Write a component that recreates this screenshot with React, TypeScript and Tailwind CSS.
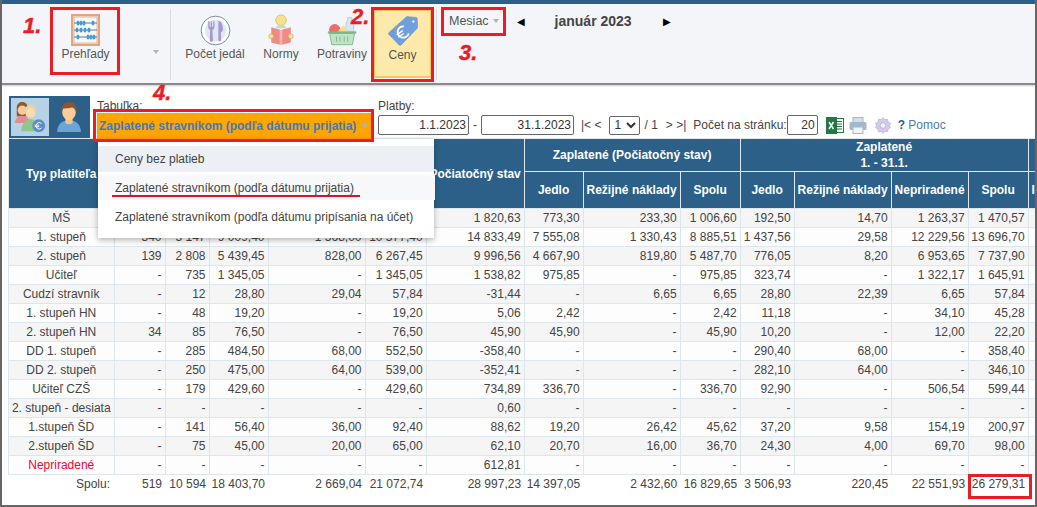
const rows: string[][] = [
    ['MŠ', '', '', '', '', '', '1 820,63', '773,30', '233,30', '1 006,60', '192,50', '14,70', '1 263,37', '1 470,57'],
    ['1. stupeň', '340', '5 147', '9 009,40', '1 568,00', '10 577,40', '14 833,49', '7 555,08', '1 330,43', '8 885,51', '1 437,56', '29,58', '12 229,56', '13 696,70'],
    ['2. stupeň', '139', '2 808', '5 439,45', '828,00', '6 267,45', '9 996,56', '4 667,90', '819,80', '5 487,70', '776,05', '8,20', '6 953,65', '7 737,90'],
    ['Učiteľ', '-', '735', '1 345,05', '-', '1 345,05', '1 538,82', '975,85', '-', '975,85', '323,74', '-', '1 322,17', '1 645,91'],
    ['Cudzí stravník', '-', '12', '28,80', '29,04', '57,84', '-31,44', '-', '6,65', '6,65', '28,80', '22,39', '6,65', '57,84'],
    ['1. stupeň HN', '-', '48', '19,20', '-', '19,20', '5,06', '2,42', '-', '2,42', '11,18', '-', '34,10', '45,28'],
    ['2. stupeň HN', '34', '85', '76,50', '-', '76,50', '45,90', '45,90', '-', '45,90', '10,20', '-', '12,00', '22,20'],
    ['DD 1. stupeň', '-', '285', '484,50', '68,00', '552,50', '-358,40', '-', '-', '-', '290,40', '68,00', '-', '358,40'],
    ['DD 2. stupeň', '-', '250', '475,00', '64,00', '539,00', '-352,41', '-', '-', '-', '282,10', '64,00', '-', '346,10'],
    ['Učiteľ CZŠ', '-', '179', '429,60', '-', '429,60', '734,89', '336,70', '-', '336,70', '92,90', '-', '506,54', '599,44'],
    ['2. stupeň - desiata', '-', '-', '-', '-', '-', '0,60', '-', '-', '-', '-', '-', '-', '-'],
    ['1.stupeň ŠD', '-', '141', '56,40', '36,00', '92,40', '88,62', '19,20', '26,42', '45,62', '37,20', '9,58', '154,19', '200,97'],
    ['2.stupeň ŠD', '-', '75', '45,00', '20,00', '65,00', '62,10', '20,70', '16,00', '36,70', '24,30', '4,00', '69,70', '98,00'],
    ['Nepriradené', '-', '-', '-', '-', '-', '612,81', '-', '-', '-', '-', '-', '-', '-'],
]

const totals = ['Spolu:', '519', '10 594', '18 403,70', '2 669,04', '21 072,74', '28 997,23', '14 397,05', '2 432,60', '16 829,65', '3 506,93', '220,45', '22 551,93', '26 279,31']

const colWidths = [
    'w-[105.5px]', 'w-[51px]', 'w-[44px]', 'w-[59px]', 'w-[97px]', 'w-[61px]', 'w-[98px]', 'w-[59px]',
    'w-[97px]', 'w-[60px]', 'w-[54px]', 'w-[97px]', 'w-[77px]', 'w-[60px]', 'w-[9px]',
]

const headCell = 'border border-[#dfe8ef] bg-[#2c6088] p-0 text-center align-middle font-bold text-white whitespace-nowrap'

function AbacusIcon() {
    const rods = [
        { y: 9, beads: [7, 10, 13, 22] },
        { y: 16, beads: [6, 10, 14, 18] },
        { y: 23, beads: [7, 17, 20, 23] },
    ]
    return (
        <svg width="29" height="32" viewBox="0 0 29 32">
            <rect x="1" y="1" width="27" height="30" fill="#fbf7f2" stroke="#e2a47e" strokeWidth="2.4" />
            <rect x="3" y="3" width="23" height="26" fill="none" stroke="#c9946f" strokeWidth="0.6" />
            {rods.map((r) => (
                <g key={r.y}>
                    <line x1="3" x2="26" y1={r.y} y2={r.y} stroke="#5d7f96" strokeWidth="1" />
                    {r.beads.map((b) => (
                        <ellipse key={b} cx={b} cy={r.y} rx="1.5" ry="2.6" fill="#3f9ddd" />
                    ))}
                </g>
            ))}
        </svg>
    )
}

function PlateIcon() {
    return (
        <svg width="31" height="31" viewBox="0 0 32 32">
            <circle cx="16" cy="16" r="14.8" fill="#fff" stroke="#76879b" strokeWidth="1" />
            <circle cx="16" cy="16" r="11" fill="#dfe9f2" />
            <path d="M8.500 6.500v6c0 1.600.8 2.500 2 3l-.5 10.500a1.700 1.700 0 0 0 3.400 0l-.5-10.500c1.200-.5 2-1.400 2-3v-6h-1.300v5.500h-1.100v-5.500h-1.400v5.500h-1.100v-5.500z" fill="#a898cf" />
            <path d="M19 6c3 0 4.600 4 4.600 9 0 1.800-.9 2.500-2.100 2.700l.4 8a1.500 1.500 0 0 1-3 0z" fill="#a898cf" />
        </svg>
    )
}

function ReaderIcon() {
    return (
        <svg width="28" height="32" viewBox="0 0 28 36">
            <circle cx="14" cy="7" r="6" fill="#fbe08c" stroke="#b6a064" strokeWidth="0.6" />
            <path d="M8 16c1-3 3-4 6-4s5 1 6 4z" fill="#bfe0bd" />
            <path d="M3 15l11 3 11-3v17l-11 3-11-3z" fill="#f08a86" />
            <path d="M14 18v17" stroke="#f9b8b4" strokeWidth="3" />
            <circle cx="3" cy="25" r="2.800" fill="#fbe08c" stroke="#b6a064" strokeWidth="0.6" />
            <circle cx="25" cy="25" r="2.800" fill="#fbe08c" stroke="#b6a064" strokeWidth="0.6" />
        </svg>
    )
}

function BasketIcon() {
    return (
        <svg width="31" height="31" viewBox="0 0 36 36">
            <path d="M24 3h5v3l2 4v9h-9v-9l2-4z" fill="#d6e8f3" stroke="#8db6d0" strokeWidth="0.6" />
            <circle cx="9" cy="17" r="6.500" fill="#ec6f6a" />
            <path d="M12 20l7-8 7 8z" fill="#f8df8a" />
            <rect x="1" y="19" width="33" height="2.500" fill="#7fb48b" />
            <path d="M3 21.500h29l-2.500 13h-24z" fill="#bfe3c4" stroke="#80b08c" strokeWidth="1" />
            <path d="M11 25v6M15 25v6M20 25v6M24 25v6" stroke="#80b08c" strokeWidth="1" />
        </svg>
    )
}

function TagIcon() {
    return (
        <svg width="30" height="32" viewBox="0 0 32 34">
            <path d="M20 1.500l10.200 1a1.200 1.200 0 0 1 1 1l.5 10-17.700 18.500a1.500 1.500 0 0 1-2.100 0L1 20.800a1.500 1.500 0 0 1 0-2.100z" fill="#6f9fdc" stroke="#5b8ccb" strokeWidth="0.5" />
            <path d="M27 5.500v3M25.500 7h3" stroke="#fff" strokeWidth="0.9" />
            <g transform="rotate(-35 15 19)">
                <path d="M20.500 14.500a6 6 0 1 0 0 9" fill="none" stroke="#fff" strokeWidth="2" />
                <path d="M9 17.500h8M9 20.500h7" stroke="#fff" strokeWidth="1.500" />
            </g>
        </svg>
    )
}

function PeopleIcon() {
    return (
        <svg width="33" height="33" viewBox="0 0 36 36">
            <path d="M3 7c0-4 3-6 6-6s6 2 6 6v10H3z" fill="#8e5a3c" />
            <circle cx="9" cy="10" r="5" fill="#f5c99a" />
            <path d="M1 24c0-5 4-8 8-8s8 3 8 8z" fill="#e88a94" />
            <path d="M12 10c0-4 3-6 6-6s6 2 6 6c0 3-1 5-1 7H13c0-2-1-4-1-7z" fill="#eed29a" />
            <circle cx="18" cy="13" r="5" fill="#f9dcb4" />
            <path d="M8 33c0-8 5-13 10-13s10 5 10 13z" fill="#8fc68b" />
            <circle cx="27" cy="27" r="7" fill="#5a8fce" />
            <path d="M30 24.500a3.500 3.500 0 1 0 0 5M22.500 26.300h5M22.500 28h5" fill="none" stroke="#fff" strokeWidth="1" />
        </svg>
    )
}

function PersonIcon() {
    return (
        <svg width="26" height="31" viewBox="0 0 28 34">
            <path d="M1 33c0-9 6-13 13-13s13 4 13 13z" fill="#6aa5d8" />
            <path d="M10 17h8v6c-2 2-6 2-8 0z" fill="#f3c48f" />
            <ellipse cx="14" cy="11" rx="7.500" ry="9" fill="#f8cd98" />
            <path d="M6 12C4 4 9 0 14 0s10 3 8 12c-1-4-3-6-5-6-3 1-8 1-9 1-1 1-2 3-2 5z" fill="#8a5434" />
        </svg>
    )
}

function ExcelIcon() {
    return (
        <svg width="18" height="17" viewBox="0 0 18 17">
            <rect x="6" y="1.500" width="11.500" height="14" fill="#fff" stroke="#217a45" />
            <path d="M11 4.500h5M11 7h5M11 9.500h5M11 12h5" stroke="#217a45" />
            <rect x="0" y="0" width="11" height="17" fill="#217a45" />
            <path d="M3 5l4.500 7M7.500 5L3 12" stroke="#fff" strokeWidth="1.500" />
        </svg>
    )
}

function PrinterIcon() {
    return (
        <svg width="18" height="17" viewBox="0 0 18 17">
            <rect x="4" y="0.500" width="10" height="5" fill="#d3dfeb" stroke="#a3b8cf" />
            <rect x="0.500" y="5" width="17" height="8" rx="1.500" fill="#a3b8cf" />
            <rect x="4" y="10" width="10" height="6.500" fill="#f0f3f7" stroke="#a3b8cf" />
        </svg>
    )
}

function GearIcon() {
    return (
        <svg width="16" height="17" viewBox="0 0 16 17">
            <path d="M8 .5l1.700 2.200 2.700-.6.700 2.700 2.400 1.400-1 2.300 1 2.300-2.400 1.400-.7 2.700-2.700-.6L8 16.500l-1.700-2.200-2.700.6-.7-2.700L.5 10.800l1-2.300-1-2.300 2.400-1.400.7-2.700 2.700.6z" fill="#d3cbe8" stroke="#b3a9d2" strokeWidth="0.6" />
            <circle cx="8" cy="8.500" r="2.800" fill="#f3f1f9" stroke="#b3a9d2" strokeWidth="0.8" />
        </svg>
    )
}

function Caret() {
    return <span className="h-0 w-0 border-x-[3.5px] border-t-[4px] border-x-transparent border-t-[#b0b3b8]" />
}

function ToolButton({ label, icon, active, className }: { label: string; icon: React.ReactNode; active?: boolean; className: string }) {
    return (
        <div className={`flex h-[68px] shrink-0 flex-col items-center ${active ? 'border-x border-t border-b-2 border-[#f3c766] bg-[#fdeaaa]' : ''} ${className}`}>
            <div className="flex h-[36px] items-end">{icon}</div>
            <span className="mt-[1px] text-[12px] leading-[14px] whitespace-nowrap text-[#555]">{label}</span>
        </div>
    )
}

function Annotation({ text, className }: { text: string; className: string }) {
    return <span className={`absolute text-[22px] leading-[20px] font-bold text-[#ed1c24] italic [-webkit-text-stroke:0.4px_#ed1c24] ${className}`}>{text}</span>
}

function RedBox({ className }: { className: string }) {
    return <div className={`pointer-events-none absolute border-[3px] border-[#ed1c24] ${className}`} />
}

export default function App() {
    return (
        <div className="relative h-[507px] w-[1037px] overflow-hidden border-x-2 border-b-2 border-[#666] bg-white font-['Liberation_Sans',sans-serif] text-[12px] text-[#444]">
            <div className="h-[4px] bg-[#2c6088]" />
            <div className="flex h-[81px] items-start border-b-2 border-[#8a8a8a] bg-[#f4f5f8] pt-[6px] shadow-[0_1px_2px_rgba(0,0,0,0.2)]">
                <ToolButton label="Prehľady" icon={<AbacusIcon />} className="ml-[49px] w-[69px]" />
                <span className="mt-[42px] ml-[33px] block"><span className="block"><Caret /></span></span>
                <div className="mt-[-1px] ml-[11px] h-[71px] w-px bg-[#d8dade]" />
                <ToolButton label="Počet jedál" icon={<PlateIcon />} className="ml-[14px] w-[60px]" />
                <ToolButton label="Normy" icon={<ReaderIcon />} className="ml-[16px] w-[40px]" />
                <ToolButton label="Potraviny" icon={<BasketIcon />} className="ml-[15px] w-[52px]" />
                <ToolButton label="Ceny" icon={<TagIcon />} active className="ml-[6px] w-[57px]" />
                <div className="mt-[-1px] ml-[5px] h-[71px] w-px bg-[#d8dade]" />
                <div className="ml-[12px] flex items-center gap-[4px] pt-[4px] text-[12.5px] leading-[14px] text-[#555]">
                    Mesiac <Caret />
                </div>
                <span className="ml-[18px] pt-[5px] text-[10px] leading-[14px] text-black">◀</span>
                <span className="ml-[30px] pt-[4px] text-[14px] leading-[14px] font-bold text-[#444]">január 2023</span>
                <span className="ml-[31px] pt-[5px] text-[10px] leading-[14px] text-black">▶</span>
            </div>

            <div className="flex h-[53px] items-start pt-[11px] pl-[7px]">
                <div className="flex h-[42px] w-[81px] bg-[#2c6088] p-[2px]">
                    <div className="flex h-[38px] w-[38px] items-center justify-center bg-[#b7d2e4]"><PeopleIcon /></div>
                    <div className="flex h-[38px] flex-1 items-center justify-center"><PersonIcon /></div>
                </div>
                <div className="ml-[7px] w-[281px]">
                    <div className="mt-[3px] text-[12px] leading-[14px] text-[#444]">Tabuľka:</div>
                    <div className="flex h-[26px] w-[276px] items-center justify-between bg-[#ffa500] pr-[5px] pb-[1px] pl-[2px] text-[12px] font-bold whitespace-nowrap text-[#4579bd]">
                        Zaplatené stravníkom (podľa dátumu prijatia)
                        <Caret />
                    </div>
                </div>
                <div>
                    <div className="mt-[3px] text-[12px] leading-[14px] text-[#444]">Platby:</div>
                    <div className="mt-[2px] flex items-center text-[12px] text-[#444]">
                        <input readOnly value="1.1.2023" className="h-[20px] w-[91px] rounded-[2px] border border-[#666] bg-white pr-[2px] text-right text-[12px] text-[#333]" />
                        <span className="mx-[4px]">-</span>
                        <input readOnly value="31.1.2023" className="h-[20px] w-[93px] rounded-[2px] border border-[#666] bg-white pr-[2px] text-right text-[12px] text-[#333]" />
                        <span className="ml-[7px] whitespace-nowrap">|&lt; &lt;</span>
                        <select className="ml-[8px] h-[19px] w-[31px] rounded-[2px] border border-[#666] bg-white text-[12px] text-[#333]" defaultValue="1">
                            <option value="1">1</option>
                        </select>
                        <span className="ml-[4px] whitespace-nowrap">/ 1</span>
                        <span className="ml-[8px] whitespace-nowrap">&gt; &gt;|</span>
                        <span className="ml-[7px] whitespace-nowrap">Počet na stránku:</span>
                        <input readOnly value="20" className="h-[20px] w-[31px] rounded-[2px] border border-[#666] bg-white pr-[2px] text-right text-[12px] text-[#333]" />
                        <span className="ml-[8px] flex"><ExcelIcon /></span>
                        <span className="ml-[5px] flex"><PrinterIcon /></span>
                        <span className="ml-[8px] flex"><GearIcon /></span>
                        <span className="ml-[7px] whitespace-nowrap text-[#4a7ba6]"><b className="text-[#2c6088]">?</b> Pomoc</span>
                    </div>
                </div>
            </div>

            <div className="pl-[6px]">
                <table className="w-[1026px] table-fixed border-collapse text-[12px] leading-[14px]">
                    <colgroup>
                        {colWidths.map((w, i) => <col key={i} className={w} />)}
                    </colgroup>
                    <thead>
                        <tr className="h-[33px]">
                            <th rowSpan={2} className={headCell}>Typ platiteľa</th>
                            <th colSpan={5} className={headCell} />
                            <th rowSpan={2} className={`${headCell} overflow-visible`}>Počiatočný stav</th>
                            <th colSpan={3} className={headCell}>Zaplatené (Počiatočný stav)</th>
                            <th colSpan={4} className={`${headCell} leading-[16px]`}>Zaplatené<br />1. - 31.1.</th>
                            <th className={headCell} />
                        </tr>
                        <tr className="h-[37px]">
                            <th className={headCell} /><th className={headCell} /><th className={headCell} /><th className={headCell} /><th className={headCell} />
                            <th className={headCell}>Jedlo</th>
                            <th className={headCell}>Režijné náklady</th>
                            <th className={headCell}>Spolu</th>
                            <th className={headCell}>Jedlo</th>
                            <th className={headCell}>Režijné náklady</th>
                            <th className={headCell}>Nepriradené</th>
                            <th className={headCell}>Spolu</th>
                            <th className={`${headCell} overflow-hidden pl-[3px] text-left`}>I</th>
                        </tr>
                    </thead>
                    <tbody>
                        {rows.map((row, i) => (
                            <tr key={row[0]} className={`h-[19px] ${i % 2 === 0 ? 'bg-[#f5f5f5]' : 'bg-[#fdfdfd]'}`}>
                                {row.map((cell, j) => (
                                    <td
                                        key={j}
                                        className={`overflow-hidden border border-[#dce6ee] p-0 whitespace-nowrap ${j === 0 ? 'text-center' : 'pr-[3px] text-right'} ${row[0] === 'Nepriradené' && j === 0 ? 'text-[#f5002d]' : ''}`}
                                    >
                                        {cell}
                                    </td>
                                ))}
                                <td className="border border-[#dce6ee] p-0" />
                            </tr>
                        ))}
                        <tr className="h-[19px]">
                            {totals.map((cell, j) => (
                                <td key={j} className={`p-0 whitespace-nowrap ${j === 0 ? 'pr-[4px] text-right' : 'pr-[3px] text-right'}`}>{cell}</td>
                            ))}
                            <td className="p-0" />
                        </tr>
                    </tbody>
                </table>
            </div>

            <div className="absolute top-[139px] left-[96px] h-[99px] w-[336px] bg-white text-[12px] text-[#444] shadow-[0_2px_6px_rgba(0,0,0,0.3)]">
                <div className="mt-[7px] flex h-[26px] items-center bg-[#eceff3] pl-[17px]">Ceny bez platieb</div>
                <div className="relative mt-[3px] flex h-[25px] w-[337px] items-center bg-[#f7f8fa] pl-[17px]">
                    Zaplatené stravníkom (podľa dátumu prijatia)
                    <span className="absolute top-[20px] left-[14px] h-[2px] w-[248px] bg-[#d9112a]" />
                </div>
                <div className="mt-[4px] flex h-[25px] items-center pl-[17px]">Zaplatené stravníkom (podľa dátumu pripísania na účet)</div>
            </div>

            <RedBox className="top-[7px] left-[48px] h-[68px] w-[70px]" />
            <RedBox className="top-[7px] left-[369px] h-[75px] w-[63px]" />
            <RedBox className="top-[7px] left-[439px] h-[29px] w-[65px]" />
            <RedBox className="top-[109px] left-[91px] h-[33px] w-[281px]" />
            <RedBox className="top-[474px] left-[966px] h-[25px] w-[64px]" />

            <Annotation text="1." className="top-[16px] left-[21px]" />
            <Annotation text="2." className="top-[7px] left-[349px]" />
            <Annotation text="3." className="top-[43px] left-[457px]" />
            <Annotation text="4." className="top-[83px] left-[151px]" />
        </div>
    )
}
